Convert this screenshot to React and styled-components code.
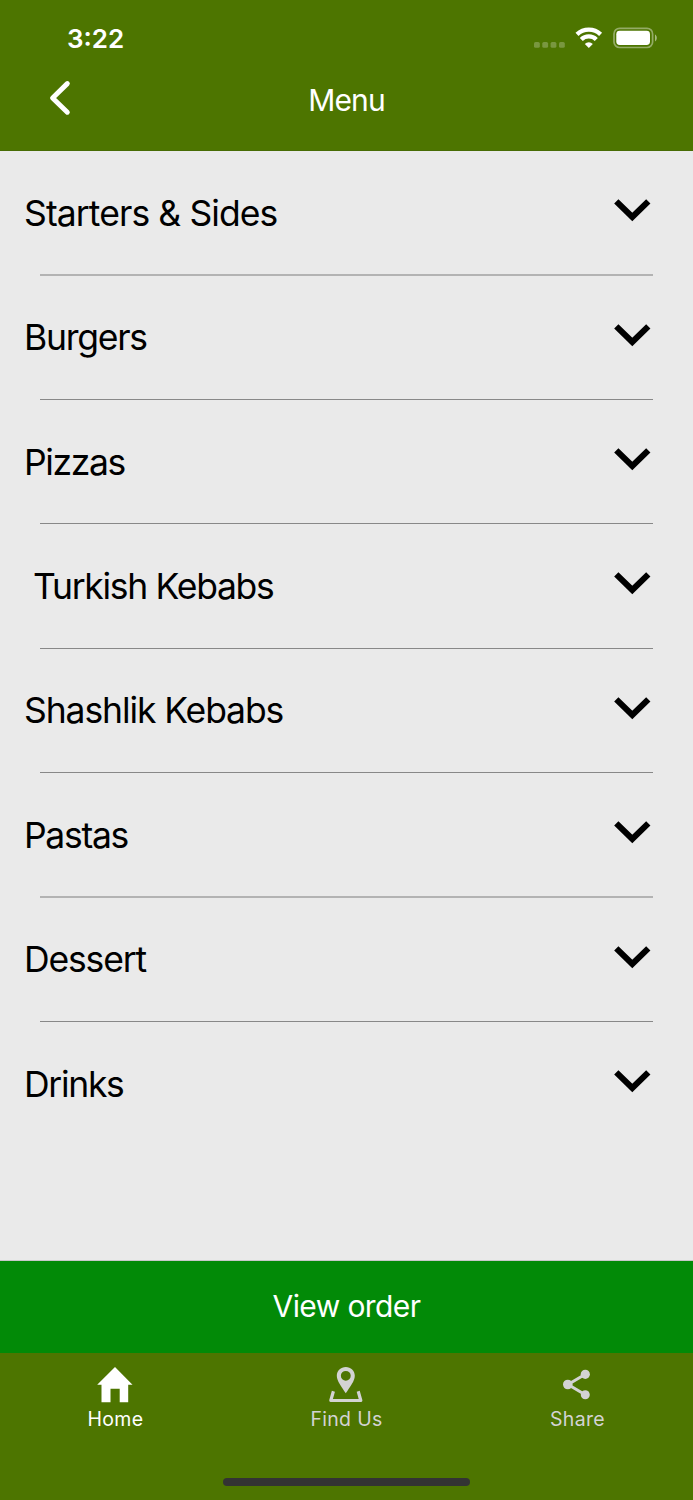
import styled, { createGlobalStyle } from "styled-components"


const categories = [
    { title: "Starters & Sides", spacing: -0.9, softLine: true },
    { title: "Burgers", spacing: -1.25 },
    { title: "Pizzas", spacing: -1.4 },
    { title: "Turkish Kebabs", spacing: -1.3, indent: 9 },
    { title: "Shashlik Kebabs", spacing: -1.1 },
    { title: "Pastas", spacing: -1.3, softLine: true },
    { title: "Dessert", spacing: -1.15 },
    { title: "Drinks", spacing: -1.3 },
]


function StatusIcons(){
    return(
    <svg width="126" height="24" viewBox="532 26 126 24">
        <g fill="#fff" fillOpacity="0.25">
            <rect x="534" y="42" width="5.8" height="5.8" rx="1.6"/>
            <rect x="542.3" y="42" width="5.8" height="5.8" rx="1.6"/>
            <rect x="550.6" y="42" width="5.8" height="5.8" rx="1.6"/>
            <rect x="559" y="42" width="5.8" height="5.8" rx="1.6"/>
        </g>
        <g fill="none" stroke="#fff" strokeWidth="4.3">
            <path d="M577 34.4A17 17 0 0 1 600.6 34.4"/>
            <path d="M581.3 39.5A10.6 10.6 0 0 1 596.3 39.5"/>
        </g>
        <path d="M588.8 47.9L584.8 43.9A5.8 5.8 0 0 1 592.8 43.9Z" fill="#fff"/>
        <rect x="614" y="28.3" width="38.6" height="19.2" rx="5.6" fill="none" stroke="#fff" strokeOpacity="0.4" strokeWidth="1.7"/>
        <rect x="616.3" y="30.8" width="33.7" height="14.2" rx="3.4" fill="#fff"/>
        <path d="M655 34.6C657.4 35.8 657.4 40.2 655 41.4Z" fill="#fff" fillOpacity="0.5"/>
    </svg>)
}

function BackIcon(){
    return(
    <svg width="24" height="36" viewBox="48 80 24 36">
        <path d="M67.3 83.6L52.6 98L67.3 112.2" fill="none" stroke="#fff" strokeWidth="5" strokeLinecap="round" strokeLinejoin="round"/>
    </svg>)
}

function ChevronDown(){
    return(
    <svg width="38" height="24" viewBox="0 0 38 24">
        <path d="M3.3 3.4L19.3 19L35.3 3.4" fill="none" stroke="#000" strokeWidth="6.1"/>
    </svg>)
}

function HomeIcon(){
    return(
    <svg width="36" height="38" viewBox="97 1366 36 38">
        <path d="M115 1367L132.5 1384.7H128.2V1402.2H119.7V1388.8H110.5V1402.2H101.5V1384.7H97.2Z" fill="#fff"/>
    </svg>)
}

function FindIcon(){
    return(
    <svg width="36" height="38" viewBox="328 1366 36 38">
        <path fillRule="evenodd" d="M345.8 1367C350.8 1367 354.8 1370.9 354.8 1375.8C354.8 1381 350 1387 345.8 1393.3C341.6 1387 336.8 1381 336.8 1375.8C336.8 1370.9 340.8 1367 345.8 1367ZM345.8 1370.9A4.9 4.9 0 1 0 345.8 1380.7A4.9 4.9 0 1 0 345.8 1370.9Z" fill="#d3d3d3"/>
        <path d="M333.4 1391.3L330.8 1400.5H360.8L358.2 1391.3" fill="none" stroke="#d3d3d3" strokeWidth="3.2" strokeLinejoin="round"/>
    </svg>)
}

function ShareIcon(){
    return(
    <svg width="36" height="38" viewBox="559 1366 36 38">
        <path d="M585.3 1374.3L568 1384.5L585.3 1394.7" fill="none" stroke="#d3d3d3" strokeWidth="3"/>
        <g fill="#d3d3d3">
            <circle cx="585.3" cy="1374.3" r="4.6"/>
            <circle cx="567.8" cy="1384.5" r="4.8"/>
            <circle cx="585.3" cy="1394.7" r="4.5"/>
        </g>
    </svg>)
}


export default function App(){
    return(<>
    <GlobalStyle/>
    <Screen>
        <Header>
            <StatusBar>
                <Time>3:22</Time>
                <StatusIcons/>
            </StatusBar>
            <NavBar>
                <BackIcon/>
                <Title>Menu</Title>
                <span/>
            </NavBar>
        </Header>
        <List>
            {categories.map((item) => (
            <Row key={item.title}>
                <RowContent>
                    <RowTitle $spacing={item.spacing} $indent={item.indent}>{item.title}</RowTitle>
                    <ChevronDown/>
                </RowContent>
                <Divider $soft={item.softLine}/>
            </Row>))}
        </List>
        <OrderButton>View order</OrderButton>
        <TabBar>
            <Tab $active><HomeIcon/><TabLabel>Home</TabLabel></Tab>
            <Tab><FindIcon/><TabLabel>Find Us</TabLabel></Tab>
            <Tab><ShareIcon/><TabLabel>Share</TabLabel></Tab>
        </TabBar>
        <HomeArea><HomeIndicator/></HomeArea>
    </Screen>
    </>)
}


const GlobalStyle=createGlobalStyle`
body{
    margin: 0;
    background-color: #4d7500;
}
*{
    box-sizing: border-box;
}
svg{
    display: block;
    flex-shrink: 0;
}
`

const Screen=styled.div`
width: 693px;
height: 1500px;
display: flex;
flex-direction: column;
font-family: Inter, "Liberation Sans", sans-serif;
background-color: #4d7500;
overflow: hidden;
`

const Header=styled.header`
height: 151px;
background-color: #4d7500;
border-bottom: 1px solid #486c05;
`

const StatusBar=styled.div`
height: 76px;
padding: 0 35px 0 67px;
display: flex;
align-items: center;
justify-content: space-between;
color: white;
`

const Time=styled.span`
font-size: 26px;
font-weight: 600;
`

const NavBar=styled.div`
height: 44px;
padding: 0 48px;
display: grid;
grid-template-columns: 24px 1fr 24px;
align-items: center;
`

const Title=styled.h1`
margin: 0;
padding-top: 4px;
font-size: 30px;
font-weight: 400;
line-height: 36px;
letter-spacing: -0.9px;
text-align: center;
color: white;
`

const List=styled.main`
height: 1110px;
flex-shrink: 0;
background-color: #eaeaea;
border-bottom: 1px solid #c8c8c8;
`

const Row=styled.section`
height: 124.4px;
display: flex;
flex-direction: column;

&:last-child > div:last-child{
    display: none;
}
`

const RowContent=styled.div`
height: 123.4px;
flex-shrink: 0;
padding: 0 42px 0 24px;
display: flex;
align-items: center;
justify-content: space-between;

svg{
    margin-bottom: 5px;
}
`

const RowTitle=styled.h2`
margin: 0;
padding-top: 1.4px;
padding-left: ${({$indent}) => $indent || 0}px;
font-size: 35.5px;
font-weight: 400;
letter-spacing: ${({$spacing}) => $spacing}px;
white-space: nowrap;
color: black;
`

const Divider=styled.div`
height: ${({$soft}) => $soft ? 2 : 1}px;
flex-shrink: 0;
margin: 0 40px;
background-color: ${({$soft}) => $soft ? "#b3b3b3" : "#888"};
`

const OrderButton=styled.button`
height: 92px;
flex-shrink: 0;
border: none;
padding: 0 0 2px;
background-color: #028a07;
color: white;
font-family: inherit;
font-size: 30px;
letter-spacing: -0.6px;
`

const TabBar=styled.nav`
height: 90px;
padding-top: 13px;
display: grid;
grid-template-columns: repeat(3, 231px);
`

const Tab=styled.div`
padding-right: 1px;
display: flex;
flex-direction: column;
align-items: center;
color: ${({$active}) => $active ? "#fff" : "#d3d3d3"};
`

const TabLabel=styled.span`
margin-top: 3px;
padding-left: 1px;
font-size: 19.5px;
line-height: 24px;
letter-spacing: 0.3px;
`

const HomeArea=styled.footer`
flex: 1;
display: flex;
justify-content: center;
align-items: flex-end;
padding-bottom: 14px;
`

const HomeIndicator=styled.div`
width: 247px;
height: 8px;
border-radius: 4px;
background-color: #333;
`
